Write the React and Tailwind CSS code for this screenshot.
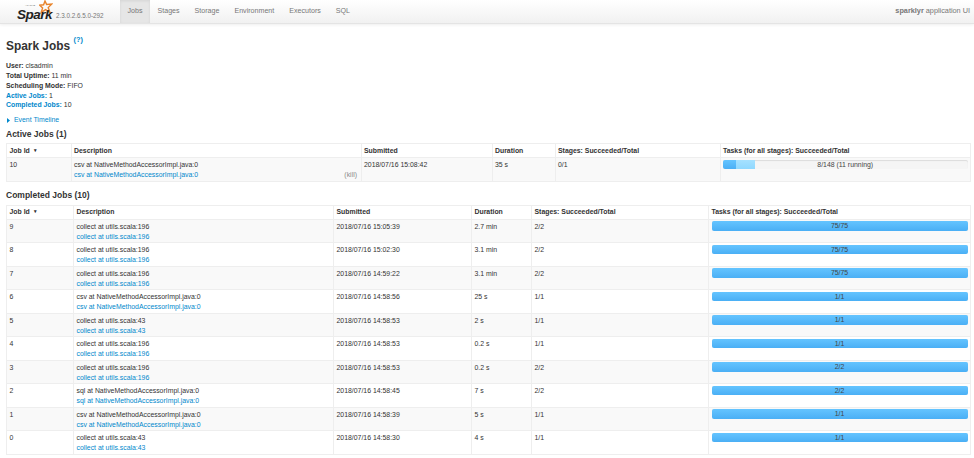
const FONT = { fontFamily: '"Liberation Sans", Arial, sans-serif' };

const COMPLETED = [
  { id: 9, name: "collect at utils.scala:196", when: "2018/07/16 15:05:39", dur: "2.7 min", stages: "2/2", tasks: "75/75" },
  { id: 8, name: "collect at utils.scala:196", when: "2018/07/16 15:02:30", dur: "3.1 min", stages: "2/2", tasks: "75/75" },
  { id: 7, name: "collect at utils.scala:196", when: "2018/07/16 14:59:22", dur: "3.1 min", stages: "2/2", tasks: "75/75" },
  { id: 6, name: "csv at NativeMethodAccessorImpl.java:0", when: "2018/07/16 14:58:56", dur: "25 s", stages: "1/1", tasks: "1/1" },
  { id: 5, name: "collect at utils.scala:43", when: "2018/07/16 14:58:53", dur: "2 s", stages: "1/1", tasks: "1/1" },
  { id: 4, name: "collect at utils.scala:196", when: "2018/07/16 14:58:53", dur: "0.2 s", stages: "1/1", tasks: "1/1" },
  { id: 3, name: "collect at utils.scala:196", when: "2018/07/16 14:58:53", dur: "0.2 s", stages: "2/2", tasks: "2/2" },
  { id: 2, name: "sql at NativeMethodAccessorImpl.java:0", when: "2018/07/16 14:58:45", dur: "7 s", stages: "2/2", tasks: "2/2" },
  { id: 1, name: "csv at NativeMethodAccessorImpl.java:0", when: "2018/07/16 14:58:39", dur: "5 s", stages: "1/1", tasks: "1/1" },
  { id: 0, name: "collect at utils.scala:43", when: "2018/07/16 14:58:30", dur: "4 s", stages: "1/1", tasks: "1/1" },
];

const TABS = ["Jobs", "Stages", "Storage", "Environment", "Executors", "SQL"];

const SparkLogo = () => (
  <div className="relative w-[40px] h-[22px] shrink-0">
    <svg className="absolute left-[23px] top-[-1px]" width="14" height="14" viewBox="0 0 14 14">
      <path
        d="M6 1 L7.6 4.4 L12.8 4 L9.2 7.6 L11 12.6 L6.6 9.6 L2.2 12.4 L3.6 8 L0.8 5.2 L4.6 4.8 Z"
        fill="none"
        stroke="#e8842c"
        strokeWidth="1.4"
        strokeLinejoin="miter"
      />
    </svg>
    <span className="absolute left-[1px] top-[6px] text-[13.5px] leading-[15px] italic font-bold text-[#222] tracking-[-0.5px]">
      Spark
    </span>
    <span className="absolute left-[9px] top-[3px] text-[2.5px] leading-[3px] text-[#666]">APACHE</span>
  </div>
);

const Navbar = () => (
  <div className="h-[24px] flex items-stretch bg-gradient-to-b from-white to-[#f1f1f1] border-b border-[#e4e4e4] shadow-[0_1px_3px_rgba(0,0,0,0.07)]">
    <div className="w-[120px] shrink-0 flex items-center pl-[16px]">
      <SparkLogo />
      <span className="mt-[9px] text-[6.3px] text-[#777] whitespace-nowrap">2.3.0.2.6.5.0-292</span>
    </div>
    <div className="flex">
      {TABS.map((tab, i) => (
        <div
          key={tab}
          className={`px-[7.5px] flex items-center text-[7.1px] text-[#777] ${i === 0 ? "bg-[#e6e6e6] shadow-[inset_0_1px_3px_rgba(0,0,0,0.08)]" : ""}`}
        >
          {tab}
        </div>
      ))}
    </div>
    <div className="ml-auto pr-[4px] flex items-center text-[7.3px] text-[#777]">
      <b className="font-bold">sparklyr</b>&nbsp;application UI
    </div>
  </div>
);

const ProgressBar = ({ label, done, running }) => (
  <div className="relative h-[9.5px] rounded-[2px] bg-[#f5f5f5] shadow-[inset_0_1px_1px_rgba(0,0,0,0.1)] overflow-hidden">
    {running && (
      <div
        className="absolute top-0 bottom-0 bg-gradient-to-b from-[#a6e1ff] to-[#8fd8ff]"
        style={{ left: `${done}%`, width: `${running}%` }}
      />
    )}
    <div
      className="absolute left-0 top-0 bottom-0 bg-gradient-to-b from-[#64c4ff] to-[#4aaff5]"
      style={{ width: `${done}%` }}
    />
    <div className="absolute inset-0 text-center text-[6.9px] leading-[9px] text-[#444]">{label}</div>
  </div>
);

const HEAD = "border border-[#eeeeee] px-[2.5px] text-left font-bold text-[#333] h-[14px] align-middle";
const CELL = "border border-[#eeeeee] px-[2.5px] pt-[2px] align-top text-[#333]";

const JobTable = ({ cols, rows }) => (
  <table className="table-fixed w-[964px] border-collapse text-[6.9px] leading-[9.8px]">
    <colgroup>
      {cols.map((w, i) => (
        <col key={i} style={{ width: w }} />
      ))}
    </colgroup>
    <thead>
      <tr>
        <th className={HEAD}>
          Job Id <span className="ml-[2px] text-[5px] align-middle">▾</span>
        </th>
        <th className={HEAD}>Description</th>
        <th className={HEAD}>Submitted</th>
        <th className={HEAD}>Duration</th>
        <th className={HEAD}>Stages: Succeeded/Total</th>
        <th className={HEAD}>Tasks (for all stages): Succeeded/Total</th>
      </tr>
    </thead>
    <tbody>
      {rows.map((r, i) => (
        <tr key={r.id} className={`h-[23.5px] ${i % 2 === 0 ? "bg-[#f9f9f9]" : "bg-white"}`}>
          <td className={CELL}>{r.id}</td>
          <td className={CELL}>
            <div className="relative">
              <div>{r.name}</div>
              <div className="text-[#0088cc]">{r.name}</div>
              {r.kill && <span className="absolute right-[1px] bottom-0 text-[#888]">(kill)</span>}
            </div>
          </td>
          <td className={CELL}>{r.when}</td>
          <td className={CELL}>{r.dur}</td>
          <td className={CELL}>{r.stages}</td>
          <td className={`${CELL} !pt-[1.5px]`}>
            <ProgressBar label={r.tasks} done={r.done ?? 100} running={r.running} />
          </td>
        </tr>
      ))}
    </tbody>
  </table>
);

const Stat = ({ label, value, link }) => (
  <div>
    <b className={`font-bold ${link ? "text-[#0088cc]" : "text-[#333]"}`}>{label}:</b> {value}
  </div>
);

export default function App() {
  return (
    <div className="h-[458px] w-[974px] overflow-hidden bg-white text-[#333]" style={FONT}>
      <Navbar />
      <div className="px-[6px]">
        <h3 className="mt-[14px] text-[11.9px] leading-[16px] font-bold">
          Spark Jobs{" "}
          <sup className="text-[#0088cc] text-[7.4px] font-bold leading-none align-[4px]">(?)</sup>
        </h3>
        <div className="mt-[7px] text-[6.9px] leading-[9.85px]">
          <Stat label="User" value="clsadmin" />
          <Stat label="Total Uptime" value="11 min" />
          <Stat label="Scheduling Mode" value="FIFO" />
          <Stat label="Active Jobs" value="1" link />
          <Stat label="Completed Jobs" value="10" link />
        </div>
        <div className="mt-[5px] flex items-center gap-[4px] pl-[1px] text-[6.9px] leading-[10px] text-[#0088cc]">
          <svg width="3" height="5" viewBox="0 0 3 5">
            <path d="M0 0 L3 2.5 L0 5 Z" fill="#0088cc" />
          </svg>
          Event Timeline
        </div>
        <h4 className="mt-[3px] mb-[3px] text-[8.5px] leading-[12px] font-bold">Active Jobs (1)</h4>
        <JobTable
          cols={["64.5px", "290px", "131px", "63px", "165px", "250.5px"]}
          rows={[
            {
              id: 10,
              name: "csv at NativeMethodAccessorImpl.java:0",
              when: "2018/07/16 15:08:42",
              dur: "35 s",
              stages: "0/1",
              tasks: "8/148 (11 running)",
              done: 5.4,
              running: 7.5,
              kill: true,
            },
          ]}
        />
        <h4 className="mt-[7px] mb-[4px] text-[8.5px] leading-[12px] font-bold">Completed Jobs (10)</h4>
        <JobTable cols={["67px", "260px", "138px", "60px", "177px", "262px"]} rows={COMPLETED} />
      </div>
    </div>
  );
}
